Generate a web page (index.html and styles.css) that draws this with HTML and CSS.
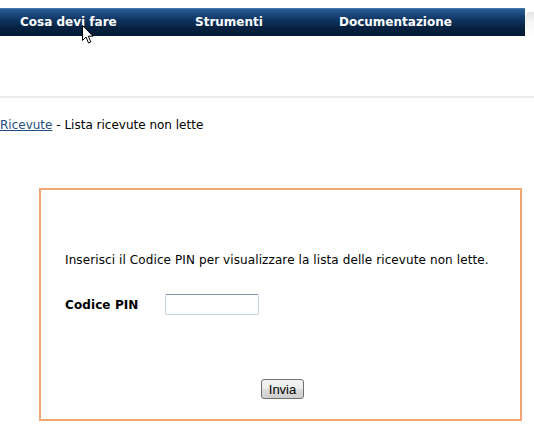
FILE: index.html
```html
<!DOCTYPE html>
<html lang="it">
<head>
<meta charset="utf-8">
<title>Lista ricevute non lette</title>
<link rel="stylesheet" href="styles.css">
</head>
<body>
<header class="top">
  <nav class="navbar">
    <a class="nav-item nav-1" href="#">Cosa devi fare</a>
    <a class="nav-item nav-2" href="#">Strumenti</a>
    <a class="nav-item nav-3" href="#">Documentazione</a>
  </nav>
  <div class="nav-tab"></div>
  <svg class="cursor" width="12" height="20" viewBox="0 0 12 20" aria-hidden="true">
    <path d="M0.5 0.5 L0.5 15.5 L4 12 L6.5 18 L8.8 17 L6.3 11.2 L11 11.2 Z" fill="#fff" stroke="#000" stroke-width="1" stroke-linejoin="round"/>
  </svg>
</header>
<div class="spacer"></div>
<hr class="rule">
<p class="crumb"><a href="#">Ricevute</a> - Lista ricevute non lette</p>
<section class="box">
  <p class="intro">Inserisci il Codice PIN per visualizzare la lista delle ricevute non lette.</p>
  <div class="field">
    <label class="label" for="pin">Codice PIN</label>
    <input class="input" id="pin" type="password">
  </div>
  <div class="actions">
    <button class="btn" type="button">Invia</button>
  </div>
</section>
</body>
</html>
```
FILE: styles.css
```css
html, body {
  margin: 0;
  padding: 0;
  background: #fff;
}
body {
  font-family: "DejaVu Sans", Verdana, sans-serif;
  font-size: 12px;
  color: #000;
}
.top {
  position: relative;
  display: flex;
  align-items: flex-end;
  margin-top: 8px;
  height: 28px;
}
.navbar {
  display: flex;
  align-items: center;
  width: 525px;
  height: 28px;
  padding-left: 20px;
  box-sizing: border-box;
  background: linear-gradient(#5a8cc0 0, #2b5f98 1px, #1d4d82 5px, #0f3462 12px, #06213f 20px, #041a33 28px);
}
.nav-item {
  color: #fff;
  font-weight: bold;
  font-size: 12px;
  text-decoration: none;
  white-space: nowrap;
}
.nav-1 { width: 175px; }
.nav-2 { width: 144px; }
.nav-3 { width: 140px; }
.nav-tab {
  width: 9px;
  height: 24px;
  border-top-left-radius: 5px;
  background: linear-gradient(#e4e4e4, #f6f6f6 40%, #fff);
}
.cursor {
  position: absolute;
  left: 82px;
  top: 17px;
}
.spacer {
  height: 60px;
}
.rule {
  margin: 0;
  border: 0;
  height: 2px;
  background: #ececec;
}
.crumb {
  margin: 19px 0 0 0;
  line-height: 16px;
}
.crumb a {
  color: #1f4d7c;
  text-decoration: underline;
}
.box {
  margin: 55px 0 0 39px;
  width: 483px;
  height: 233px;
  box-sizing: border-box;
  border: 2px solid #f2a672;
  padding: 62px 0 0 24px;
  letter-spacing: 0.1px;
}
.intro {
  margin: 0;
  line-height: 16px;
}
.field {
  display: flex;
  align-items: center;
  margin-top: 26px;
}
.label {
  width: 100px;
  font-weight: bold;
}
.input {
  width: 94px;
  height: 21px;
  box-sizing: border-box;
  margin: 0;
  border: 1px solid #c3d3e0;
  border-top-color: #7b98b2;
  border-radius: 2px;
  background: #fff;
}
.actions {
  display: flex;
  justify-content: center;
  margin-top: 64px;
  padding-right: 24px;
  padding-left: 4px;
}
.btn {
  height: 20px;
  padding: 0 7px;
  font-family: "Liberation Sans", Arial, sans-serif;
  font-size: 13px;
  letter-spacing: 0;
  color: #000;
  border: 1px solid #707070;
  border-radius: 3px;
  background: linear-gradient(#f2f2f2 0, #ebebeb 50%, #dddddd 51%, #cfcfcf 100%);
}
```
